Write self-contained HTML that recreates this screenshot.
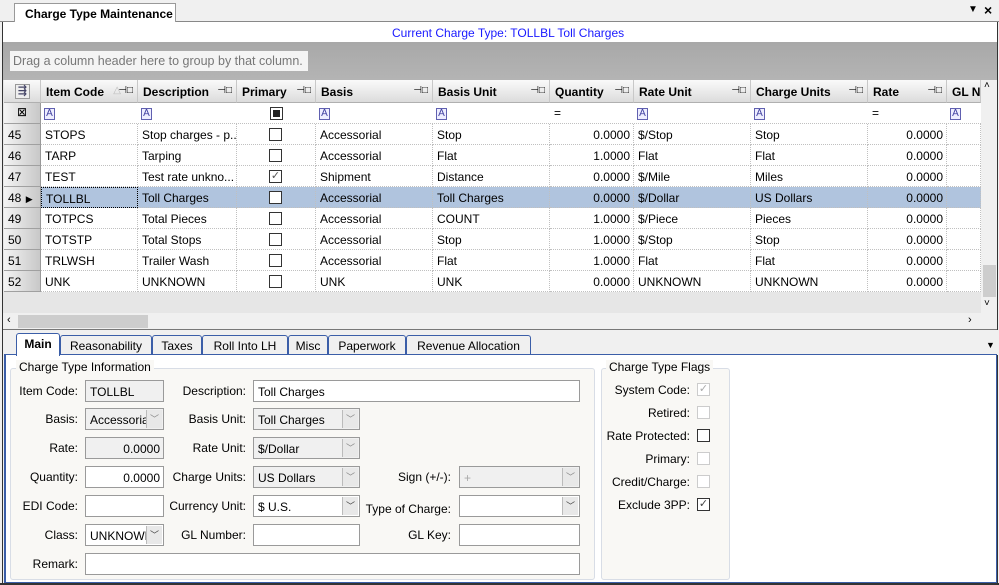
<!DOCTYPE html>
<html><head><meta charset="utf-8"><style>
*{box-sizing:border-box;margin:0;padding:0}
body{width:999px;height:585px;overflow:hidden;background:#f0f0f0;font-family:"Liberation Sans","DejaVu Sans",sans-serif;font-size:12px;color:#000;position:relative}
.a{position:absolute;white-space:nowrap;overflow:hidden}
.hd{background:linear-gradient(#fafafa,#dcdcdc);border-right:1px solid #c8c8c8;border-bottom:1px solid #b0b0b0;font-weight:bold;font-size:12px;padding:5px 0 0 5px;height:23px}
.pin{position:absolute;right:4px;top:5px;font-weight:normal;font-size:10px}
.cell{border-right:1px dotted #c0c0c0;border-bottom:1px dotted #c0c0c0;height:21px;padding:4px 0 0 4px;background:#fff}
.sel{background:#b0c4de}
.rh{background:linear-gradient(90deg,#f4f4f4,#c8c8c8);border-bottom:1px solid #a0a0a0;border-right:1px solid #999;height:21px;padding:4px 0 0 4px}
.cb{position:absolute;width:13px;height:13px;border:1px solid #333;background:#fff}
.fA{position:absolute;width:11px;height:12px;border:1px solid #6060b0;color:#4040a0;font-size:10px;line-height:10px;text-align:center;background:#eef}
.lbl{position:absolute;text-align:right;white-space:nowrap}
.in{position:absolute;border:1px solid #9a9a9a;background:#fff;height:22px;padding:4px 0 0 4px;white-space:nowrap;overflow:hidden}
.dis{background:#f0f0f0}
.dd{position:absolute;right:1px;top:1px;bottom:1px;width:16px;border-left:1px solid #bbb;background:#e8e8e8;color:#888;font-size:9px;text-align:center;line-height:18px}
.tab{position:absolute;top:335px;height:20px;border:1px solid #3b5ea8;border-bottom:none;background:#f0f0f0;padding:3px 0 0;text-align:center;border-radius:3px 3px 0 0}
</style></head><body>
<!-- top tab -->
<div class="a" style="left:0;top:0;width:999px;height:22px;background:#f0f0f0;border-bottom:1px solid #888"></div>
<div class="a" style="left:14px;top:3px;width:162px;height:20px;background:#fff;border:1px solid #999;border-bottom:none;font-weight:bold;padding:3px 0 0 10px">Charge Type Maintenance</div>
<div class="a" style="left:968px;top:4px;font-size:10px">▼</div>
<div class="a" style="left:984px;top:2px;font-size:14px;font-weight:bold">×</div>
<div class="a" style="left:2px;top:22px;width:996px;height:20px;background:#fff;border-left:1px solid #333;border-right:1px solid #333"></div>
<div class="a" style="left:392px;top:26px;color:#1a1aff">Current Charge Type: TOLLBL Toll Charges</div>
<!-- group panel -->
<div class="a" style="left:3px;top:42px;width:995px;height:38px;background:linear-gradient(#a8a8a8,#b4b4b4)"></div>
<div class="a" style="left:10px;top:51px;width:298px;height:20px;background:#f4f4f4;color:#777;padding:3px 0 0 3px;font-size:12.5px">Drag a column header here to group by that column.</div>
<!-- grid area bg -->
<div class="a" style="left:3px;top:80px;width:978px;height:233px;background:#e6e6e6"></div>
<div class="a" style="left:981px;top:80px;width:17px;height:233px;background:#f0f0f0"></div>
<div class="a" style="left:984px;top:80px;font-size:10px">˄</div>
<div class="a" style="left:983px;top:265px;width:13px;height:32px;background:#cdcdcd"></div>
<div class="a" style="left:984px;top:298px;font-size:10px">˅</div>
<!-- header -->
<div class="a hd" style="left:4px;top:80px;width:37px;padding:3px 0 0 11px"><span style="display:inline-block;width:15px;height:15px;border:1px solid #999;background:#eee;font-size:11px;line-height:12px;text-align:center;color:#446">⇶</span></div>
<div class="a hd" style="left:41px;top:80px;width:97px">Item Code<span class="pin" style="right:16px;color:#bbb">△</span><span class="pin">⊣□</span></div>
<div class="a hd" style="left:138px;top:80px;width:99px">Description<span class="pin">⊣□</span></div>
<div class="a hd" style="left:237px;top:80px;width:79px">Primary<span class="pin">⊣□</span></div>
<div class="a hd" style="left:316px;top:80px;width:117px">Basis<span class="pin">⊣□</span></div>
<div class="a hd" style="left:433px;top:80px;width:117px">Basis Unit<span class="pin">⊣□</span></div>
<div class="a hd" style="left:550px;top:80px;width:84px">Quantity<span class="pin">⊣□</span></div>
<div class="a hd" style="left:634px;top:80px;width:117px">Rate Unit<span class="pin">⊣□</span></div>
<div class="a hd" style="left:751px;top:80px;width:117px">Charge Units<span class="pin">⊣□</span></div>
<div class="a hd" style="left:868px;top:80px;width:79px">Rate<span class="pin">⊣□</span></div>
<div class="a hd" style="left:947px;top:80px;width:34px">GL Nu</div>
<!-- filter row -->
<div class="a" style="left:4px;top:103px;width:977px;height:21px;background:#fff;border-bottom:1px dotted #c0c0c0"></div>
<div class="a rh" style="left:4px;top:103px;width:37px;text-align:center;padding:2px 0 0">⊠</div>
<div class="fA" style="left:44px;top:108px">A</div>
<div class="fA" style="left:141px;top:108px">A</div>
<div class="a" style="left:270px;top:107px;width:13px;height:13px;border:1px solid #333;background:#fff"><div style="margin:2px;width:7px;height:7px;background:#222"></div></div>
<div class="fA" style="left:319px;top:108px">A</div>
<div class="fA" style="left:436px;top:108px">A</div>
<div class="a" style="left:554px;top:106px">=</div>
<div class="fA" style="left:637px;top:108px">A</div>
<div class="fA" style="left:754px;top:108px">A</div>
<div class="a" style="left:872px;top:106px">=</div>
<div class="fA" style="left:950px;top:108px">A</div>

<!-- rows -->
<div id="rows"></div>
<div class="a rh" style="left:4px;top:124px;width:37px">45</div>
<div class="a cell" style="left:41px;top:124px;width:97px">STOPS</div><div class="a cell" style="left:138px;top:124px;width:99px">Stop charges - p...</div><div class="a cell" style="left:237px;top:124px;width:79px"></div><div class="cb" style="left:269px;top:128px"></div><div class="a cell" style="left:316px;top:124px;width:117px">Accessorial</div><div class="a cell" style="left:433px;top:124px;width:117px">Stop</div><div class="a cell" style="left:550px;top:124px;width:84px;text-align:right;padding-right:3px">0.0000</div><div class="a cell" style="left:634px;top:124px;width:117px">$/Stop</div><div class="a cell" style="left:751px;top:124px;width:117px">Stop</div><div class="a cell" style="left:868px;top:124px;width:79px;text-align:right;padding-right:3px">0.0000</div><div class="a cell" style="left:947px;top:124px;width:34px"></div>

<div class="a rh" style="left:4px;top:145px;width:37px">46</div>
<div class="a cell" style="left:41px;top:145px;width:97px">TARP</div><div class="a cell" style="left:138px;top:145px;width:99px">Tarping</div><div class="a cell" style="left:237px;top:145px;width:79px"></div><div class="cb" style="left:269px;top:149px"></div><div class="a cell" style="left:316px;top:145px;width:117px">Accessorial</div><div class="a cell" style="left:433px;top:145px;width:117px">Flat</div><div class="a cell" style="left:550px;top:145px;width:84px;text-align:right;padding-right:3px">1.0000</div><div class="a cell" style="left:634px;top:145px;width:117px">Flat</div><div class="a cell" style="left:751px;top:145px;width:117px">Flat</div><div class="a cell" style="left:868px;top:145px;width:79px;text-align:right;padding-right:3px">0.0000</div><div class="a cell" style="left:947px;top:145px;width:34px"></div>

<div class="a rh" style="left:4px;top:166px;width:37px">47</div>
<div class="a cell" style="left:41px;top:166px;width:97px">TEST</div><div class="a cell" style="left:138px;top:166px;width:99px">Test rate unkno...</div><div class="a cell" style="left:237px;top:166px;width:79px"></div><div class="cb" style="left:269px;top:170px;font-size:11px;line-height:11px;text-align:center;color:#555">✓</div><div class="a cell" style="left:316px;top:166px;width:117px">Shipment</div><div class="a cell" style="left:433px;top:166px;width:117px">Distance</div><div class="a cell" style="left:550px;top:166px;width:84px;text-align:right;padding-right:3px">0.0000</div><div class="a cell" style="left:634px;top:166px;width:117px">$/Mile</div><div class="a cell" style="left:751px;top:166px;width:117px">Miles</div><div class="a cell" style="left:868px;top:166px;width:79px;text-align:right;padding-right:3px">0.0000</div><div class="a cell" style="left:947px;top:166px;width:34px"></div>

<div class="a rh" style="left:4px;top:187px;width:37px">48 <span style="font-size:9px;margin-left:1px">▶</span></div>
<div class="a cell sel" style="left:41px;top:187px;width:97px;border:1px dotted #000">TOLLBL</div><div class="a cell sel" style="left:138px;top:187px;width:99px">Toll Charges</div><div class="a cell sel" style="left:237px;top:187px;width:79px"></div><div class="cb" style="left:269px;top:191px"></div><div class="a cell sel" style="left:316px;top:187px;width:117px">Accessorial</div><div class="a cell sel" style="left:433px;top:187px;width:117px">Toll Charges</div><div class="a cell sel" style="left:550px;top:187px;width:84px;text-align:right;padding-right:3px">0.0000</div><div class="a cell sel" style="left:634px;top:187px;width:117px">$/Dollar</div><div class="a cell sel" style="left:751px;top:187px;width:117px">US Dollars</div><div class="a cell sel" style="left:868px;top:187px;width:79px;text-align:right;padding-right:3px">0.0000</div><div class="a cell sel" style="left:947px;top:187px;width:34px"></div>

<div class="a rh" style="left:4px;top:208px;width:37px">49</div>
<div class="a cell" style="left:41px;top:208px;width:97px">TOTPCS</div><div class="a cell" style="left:138px;top:208px;width:99px">Total Pieces</div><div class="a cell" style="left:237px;top:208px;width:79px"></div><div class="cb" style="left:269px;top:212px"></div><div class="a cell" style="left:316px;top:208px;width:117px">Accessorial</div><div class="a cell" style="left:433px;top:208px;width:117px">COUNT</div><div class="a cell" style="left:550px;top:208px;width:84px;text-align:right;padding-right:3px">1.0000</div><div class="a cell" style="left:634px;top:208px;width:117px">$/Piece</div><div class="a cell" style="left:751px;top:208px;width:117px">Pieces</div><div class="a cell" style="left:868px;top:208px;width:79px;text-align:right;padding-right:3px">0.0000</div><div class="a cell" style="left:947px;top:208px;width:34px"></div>

<div class="a rh" style="left:4px;top:229px;width:37px">50</div>
<div class="a cell" style="left:41px;top:229px;width:97px">TOTSTP</div><div class="a cell" style="left:138px;top:229px;width:99px">Total Stops</div><div class="a cell" style="left:237px;top:229px;width:79px"></div><div class="cb" style="left:269px;top:233px"></div><div class="a cell" style="left:316px;top:229px;width:117px">Accessorial</div><div class="a cell" style="left:433px;top:229px;width:117px">Stop</div><div class="a cell" style="left:550px;top:229px;width:84px;text-align:right;padding-right:3px">1.0000</div><div class="a cell" style="left:634px;top:229px;width:117px">$/Stop</div><div class="a cell" style="left:751px;top:229px;width:117px">Stop</div><div class="a cell" style="left:868px;top:229px;width:79px;text-align:right;padding-right:3px">0.0000</div><div class="a cell" style="left:947px;top:229px;width:34px"></div>

<div class="a rh" style="left:4px;top:250px;width:37px">51</div>
<div class="a cell" style="left:41px;top:250px;width:97px">TRLWSH</div><div class="a cell" style="left:138px;top:250px;width:99px">Trailer Wash</div><div class="a cell" style="left:237px;top:250px;width:79px"></div><div class="cb" style="left:269px;top:254px"></div><div class="a cell" style="left:316px;top:250px;width:117px">Accessorial</div><div class="a cell" style="left:433px;top:250px;width:117px">Flat</div><div class="a cell" style="left:550px;top:250px;width:84px;text-align:right;padding-right:3px">1.0000</div><div class="a cell" style="left:634px;top:250px;width:117px">Flat</div><div class="a cell" style="left:751px;top:250px;width:117px">Flat</div><div class="a cell" style="left:868px;top:250px;width:79px;text-align:right;padding-right:3px">0.0000</div><div class="a cell" style="left:947px;top:250px;width:34px"></div>

<div class="a rh" style="left:4px;top:271px;width:37px">52</div>
<div class="a cell" style="left:41px;top:271px;width:97px">UNK</div><div class="a cell" style="left:138px;top:271px;width:99px">UNKNOWN</div><div class="a cell" style="left:237px;top:271px;width:79px"></div><div class="cb" style="left:269px;top:275px"></div><div class="a cell" style="left:316px;top:271px;width:117px">UNK</div><div class="a cell" style="left:433px;top:271px;width:117px">UNK</div><div class="a cell" style="left:550px;top:271px;width:84px;text-align:right;padding-right:3px">0.0000</div><div class="a cell" style="left:634px;top:271px;width:117px">UNKNOWN</div><div class="a cell" style="left:751px;top:271px;width:117px">UNKNOWN</div><div class="a cell" style="left:868px;top:271px;width:79px;text-align:right;padding-right:3px">0.0000</div><div class="a cell" style="left:947px;top:271px;width:34px"></div>

<!-- h scrollbar -->
<div class="a" style="left:3px;top:313px;width:995px;height:17px;background:#f0f0f0;border-bottom:1px solid #777"></div>
<div class="a" style="left:7px;top:314px;font-size:11px">‹</div>
<div class="a" style="left:18px;top:315px;width:130px;height:13px;background:#cdcdcd"></div>
<div class="a" style="left:968px;top:314px;font-size:11px">›</div>
<div class="a" style="left:0;top:22px;width:3px;height:563px;background:#f0f0f0;border-right:1px solid #333"></div>
<div class="a" style="left:997px;top:22px;width:2px;height:563px;border-left:1px solid #333"></div>

<!-- tabs -->
<div class="a" style="left:3px;top:330px;width:995px;height:25px;background:#f0f0f0"></div>
<div class="a" style="left:986px;top:340px;font-size:9px">▼</div>
<div class="tab" style="left:60px;width:92px">Reasonability</div>
<div class="tab" style="left:152px;width:50px">Taxes</div>
<div class="tab" style="left:202px;width:86px">Roll Into LH</div>
<div class="tab" style="left:288px;width:40px">Misc</div>
<div class="tab" style="left:328px;width:78px">Paperwork</div>
<div class="tab" style="left:406px;width:125px">Revenue Allocation</div>
<div class="a" style="left:4px;top:354px;width:993px;height:229px;background:#fff;border:1px solid #3b5ea8;border-left:2px solid #3b5ea8"></div>
<div class="tab" style="left:16px;top:333px;width:44px;height:23px;background:#fff;font-weight:bold;border-bottom:none;z-index:2">Main</div>
<!-- groupboxes -->
<div class="a" style="left:10px;top:368px;width:585px;height:212px;background:#f9f8f5;border:1px solid #d8dde6;border-radius:3px"></div>
<div class="a" style="left:16px;top:360px;background:#f9f8f5;padding:0 3px">Charge Type Information</div>
<div class="a" style="left:601px;top:368px;width:129px;height:212px;background:#f9f8f5;border:1px solid #d8dde6;border-radius:3px"></div>
<div class="a" style="left:606px;top:360px;background:#f9f8f5;padding:0 3px">Charge Type Flags</div>

<!-- form -->
<div class="lbl" style="left:0;width:78px;top:384px">Item Code:</div>
<div class="in dis" style="left:85px;top:380px;width:79px">TOLLBL</div>
<div class="lbl" style="left:160px;width:86px;top:384px">Description:</div>
<div class="in" style="left:253px;top:380px;width:327px">Toll Charges</div>

<div class="lbl" style="left:0;width:78px;top:412px">Basis:</div>
<div class="in dis" style="left:85px;top:408px;width:79px">Accessorial<div class="dd">﹀</div></div>
<div class="lbl" style="left:160px;width:86px;top:412px">Basis Unit:</div>
<div class="in dis" style="left:253px;top:408px;width:107px">Toll Charges<div class="dd">﹀</div></div>

<div class="lbl" style="left:0;width:78px;top:441px">Rate:</div>
<div class="in dis" style="left:85px;top:437px;width:79px;text-align:right;padding-right:3px">0.0000</div>
<div class="lbl" style="left:160px;width:86px;top:441px">Rate Unit:</div>
<div class="in dis" style="left:253px;top:437px;width:107px">$/Dollar<div class="dd">﹀</div></div>

<div class="lbl" style="left:0;width:78px;top:470px">Quantity:</div>
<div class="in" style="left:85px;top:466px;width:79px;text-align:right;padding-right:3px">0.0000</div>
<div class="lbl" style="left:160px;width:86px;top:470px">Charge Units:</div>
<div class="in dis" style="left:253px;top:466px;width:107px">US Dollars<div class="dd">﹀</div></div>
<div class="lbl" style="left:360px;width:91px;top:470px">Sign (+/-):</div>
<div class="in dis" style="left:459px;top:466px;width:121px;color:#aaa">+<div class="dd">﹀</div></div>

<div class="lbl" style="left:0;width:78px;top:499px">EDI Code:</div>
<div class="in" style="left:85px;top:495px;width:79px"></div>
<div class="lbl" style="left:160px;width:86px;top:499px">Currency Unit:</div>
<div class="in" style="left:253px;top:495px;width:107px">$ U.S.<div class="dd" style="color:#444">﹀</div></div>
<div class="lbl" style="left:360px;width:91px;top:502px">Type of Charge:</div>
<div class="in" style="left:459px;top:495px;width:121px"><div class="dd" style="color:#444">﹀</div></div>

<div class="lbl" style="left:0;width:78px;top:528px">Class:</div>
<div class="in" style="left:85px;top:524px;width:79px">UNKNOWN<div class="dd" style="color:#444">﹀</div></div>
<div class="lbl" style="left:160px;width:86px;top:528px">GL Number:</div>
<div class="in" style="left:253px;top:524px;width:107px"></div>
<div class="lbl" style="left:360px;width:91px;top:528px">GL Key:</div>
<div class="in" style="left:459px;top:524px;width:121px"></div>

<div class="lbl" style="left:0;width:78px;top:557px">Remark:</div>
<div class="in" style="left:85px;top:553px;width:495px"></div>

<!-- flags -->
<div class="lbl" style="left:600px;width:90px;top:383px">System Code:</div>
<div class="cb" style="left:697px;top:383px;border-color:#ccc;color:#aaa;font-size:11px;line-height:11px;text-align:center">✓</div>
<div class="lbl" style="left:600px;width:90px;top:406px">Retired:</div>
<div class="cb" style="left:697px;top:406px;border-color:#ccc"></div>
<div class="lbl" style="left:600px;width:90px;top:429px">Rate Protected:</div>
<div class="cb" style="left:697px;top:429px"></div>
<div class="lbl" style="left:600px;width:90px;top:452px">Primary:</div>
<div class="cb" style="left:697px;top:452px;border-color:#ccc"></div>
<div class="lbl" style="left:600px;width:90px;top:475px">Credit/Charge:</div>
<div class="cb" style="left:697px;top:475px;border-color:#ccc"></div>
<div class="lbl" style="left:600px;width:90px;top:498px">Exclude 3PP:</div>
<div class="cb" style="left:697px;top:498px;color:#444;font-size:11px;line-height:11px;text-align:center">✓</div>
<div class="a" style="left:0;top:583px;width:999px;height:2px;background:#333"></div>
</body></html>
